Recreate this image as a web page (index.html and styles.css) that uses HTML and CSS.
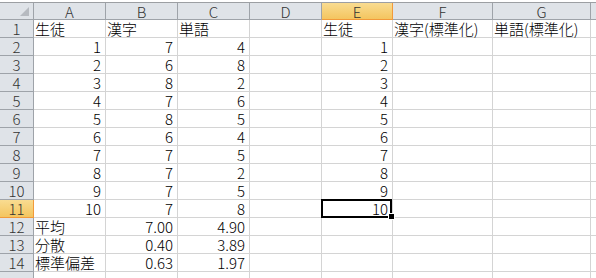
FILE: index.html
```html
<!DOCTYPE html>
<html lang="ja">
<head>
    <meta charset="UTF-8">
    <meta name="viewport" content="width=device-width, initial-scale=1.0">
    <title>Book1</title>
    <link rel="stylesheet" href="styles.css">
</head>
<body>
    <div class="sheet">
        <!-- column headers -->
        <div class="corner"></div>
        <div class="col-head">A</div>
        <div class="col-head">B</div>
        <div class="col-head">C</div>
        <div class="col-head">D</div>
        <div class="col-head active">E</div>
        <div class="col-head">F</div>
        <div class="col-head">G</div>
        <div class="col-head last"></div>

        <div class="row-head">1</div>
        <div class="cell">生徒</div><div class="cell">漢字</div><div class="cell">単語</div><div class="cell"></div>
        <div class="cell">生徒</div><div class="cell">漢字(標準化)</div><div class="cell">単語(標準化)</div><div class="cell"></div>

        <div class="row-head">2</div>
        <div class="cell num">1</div><div class="cell num">7</div><div class="cell num">4</div><div class="cell"></div>
        <div class="cell num">1</div><div class="cell"></div><div class="cell"></div><div class="cell"></div>

        <div class="row-head">3</div>
        <div class="cell num">2</div><div class="cell num">6</div><div class="cell num">8</div><div class="cell"></div>
        <div class="cell num">2</div><div class="cell"></div><div class="cell"></div><div class="cell"></div>

        <div class="row-head">4</div>
        <div class="cell num">3</div><div class="cell num">8</div><div class="cell num">2</div><div class="cell"></div>
        <div class="cell num">3</div><div class="cell"></div><div class="cell"></div><div class="cell"></div>

        <div class="row-head">5</div>
        <div class="cell num">4</div><div class="cell num">7</div><div class="cell num">6</div><div class="cell"></div>
        <div class="cell num">4</div><div class="cell"></div><div class="cell"></div><div class="cell"></div>

        <div class="row-head">6</div>
        <div class="cell num">5</div><div class="cell num">8</div><div class="cell num">5</div><div class="cell"></div>
        <div class="cell num">5</div><div class="cell"></div><div class="cell"></div><div class="cell"></div>

        <div class="row-head">7</div>
        <div class="cell num">6</div><div class="cell num">6</div><div class="cell num">4</div><div class="cell"></div>
        <div class="cell num">6</div><div class="cell"></div><div class="cell"></div><div class="cell"></div>

        <div class="row-head">8</div>
        <div class="cell num">7</div><div class="cell num">7</div><div class="cell num">5</div><div class="cell"></div>
        <div class="cell num">7</div><div class="cell"></div><div class="cell"></div><div class="cell"></div>

        <div class="row-head">9</div>
        <div class="cell num">8</div><div class="cell num">7</div><div class="cell num">2</div><div class="cell"></div>
        <div class="cell num">8</div><div class="cell"></div><div class="cell"></div><div class="cell"></div>

        <div class="row-head">10</div>
        <div class="cell num">9</div><div class="cell num">7</div><div class="cell num">5</div><div class="cell"></div>
        <div class="cell num">9</div><div class="cell"></div><div class="cell"></div><div class="cell"></div>

        <div class="row-head active">11</div>
        <div class="cell num">10</div><div class="cell num">7</div><div class="cell num">8</div><div class="cell"></div>
        <div class="cell num selected">10</div><div class="cell"></div><div class="cell"></div><div class="cell"></div>

        <div class="row-head">12</div>
        <div class="cell">平均</div><div class="cell num">7.00</div><div class="cell num">4.90</div><div class="cell"></div>
        <div class="cell"></div><div class="cell"></div><div class="cell"></div><div class="cell"></div>

        <div class="row-head">13</div>
        <div class="cell">分散</div><div class="cell num">0.40</div><div class="cell num">3.89</div><div class="cell"></div>
        <div class="cell"></div><div class="cell"></div><div class="cell"></div><div class="cell"></div>

        <div class="row-head">14</div>
        <div class="cell">標準偏差</div><div class="cell num">0.63</div><div class="cell num">1.97</div><div class="cell"></div>
        <div class="cell"></div><div class="cell"></div><div class="cell"></div><div class="cell"></div>

        <div class="row-head"></div>
        <div class="cell"></div><div class="cell"></div><div class="cell"></div><div class="cell"></div>
        <div class="cell"></div><div class="cell"></div><div class="cell"></div><div class="cell"></div>
    </div>
</body>
</html>
```

FILE: styles.css
```css
body {
    margin: 0;
    padding-top: 2px;
    background: #ffffff;
    font-family: "Noto Sans CJK JP", sans-serif;
    font-size: 15px;
    font-weight: 300;
    color: #000000;
    overflow: hidden;
}
.sheet {
    display: grid;
    grid-template-columns: 34px 72px 72px 72px 72px 71px 100px 98px 1fr;
    grid-template-rows: 17px;
    grid-auto-rows: 18px;
    border-top: 1px solid #9c9fa3;
}
.sheet > div {
    box-sizing: border-box;
    line-height: 17px;
    white-space: nowrap;
}
.corner {
    position: relative;
    background: #dfe3e8;
    border-right: 1px solid #9ea3a9;
    border-bottom: 1px solid #9ea3a9;
}
.corner::after {
    content: "";
    position: absolute;
    right: 4px;
    bottom: 3px;
    border-left: 9px solid transparent;
    border-bottom: 9px solid #b6bac0;
}
.col-head {
    background: #dfe3e8;
    color: #333333;
    text-align: center;
    border-right: 1px solid #9ea3a9;
    border-bottom: 1px solid #9ea3a9;
}
.col-head.last {
    border-right: none;
}
.row-head {
    background: #dfe3e8;
    color: #333333;
    text-align: center;
    border-right: 1px solid #9ea3a9;
    border-bottom: 1px solid #9ea3a9;
}
.col-head.active,
.row-head.active {
    background: linear-gradient(#f9dc91, #f4c55f);
    border-right-color: #f29a3a;
    border-bottom-color: #f29a3a;
}
.cell {
    padding: 0 4px 0 1px;
    border-right: 1px solid #d4d4d4;
    border-bottom: 1px solid #d4d4d4;
}
.num {
    text-align: right;
}
.selected {
    position: relative;
}
.selected::before {
    content: "";
    position: absolute;
    left: -1px;
    top: -1px;
    right: 0;
    bottom: -1px;
    border: 2px solid #000000;
}
.selected::after {
    content: "";
    position: absolute;
    right: -3px;
    bottom: -3px;
    width: 5px;
    height: 5px;
    background: #000000;
    border: 1px solid #ffffff;
}
```
